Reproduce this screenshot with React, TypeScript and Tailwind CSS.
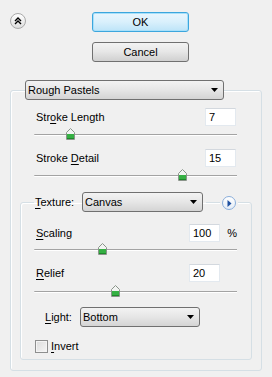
import React from 'react';

function Arrow() {
  return (
    <svg width="7" height="4" viewBox="0 0 7 4" className="shrink-0">
      <path d="M0 0 H7 L3.5 4 Z" fill="#000" />
    </svg>
  );
}

function Dropdown({ label, width }: { label: string; width: number }) {
  return (
    <div
      className="flex items-center justify-between h-[20px] pl-[2px] pr-[5px] rounded-[3px] border border-[#707070] bg-gradient-to-b from-[#f3f3f3] via-[#e6e6e6] to-[#d4d4d4] text-black"
      style={{ width }}
    >
      <span className="leading-none">{label}</span>
      <Arrow />
    </div>
  );
}

function NumInput({ value }: { value: string }) {
  return (
    <div className="w-[31px] h-[18px] flex items-center pl-[3px] bg-white border border-[#e3e9ef] border-t-[#d3d8de] leading-none">
      {value}
    </div>
  );
}

function Thumb() {
  return (
    <svg width="9" height="12" viewBox="0 0 9 12">
      <path d="M4.5 0.5 L8.5 4.5 V11.5 H0.5 V4.5 Z" fill="#f2f4f2" stroke="#8a948a" />
      <rect x="1" y="6" width="7" height="5" fill="#35b043" />
      <rect x="1" y="10" width="7" height="1" fill="#1f8a2c" />
    </svg>
  );
}

function Slider({ pos }: { pos: number }) {
  return (
    <div className="relative h-[14px]">
      <div className="absolute left-0 right-0 top-[7px] h-[2px] border-t border-[#a3a3a3] bg-white rounded-l-full" />
      <div className="absolute top-[1px]" style={{ left: pos - 4 }}>
        <Thumb />
      </div>
    </div>
  );
}

function Mn({ pre, u, post }: { pre?: string; u: string; post?: string }) {
  return (
    <span className="leading-none">
      {pre}
      <span className="underline underline-offset-[2px]">{u}</span>
      {post}
    </span>
  );
}

export default function App() {
  return (
    <div className="w-[272px] h-[377px] bg-[#f0f0f0] text-[11px] text-black font-['Liberation_Sans',Arial,sans-serif] overflow-hidden">
      {/* top: collapse + buttons */}
      <div className="flex pt-[12px] pl-[10px]">
        <div className="mt-[1px] w-[16px] h-[16px] rounded-full border border-[#a9a9a9] bg-gradient-to-b from-white to-[#dedede] flex items-center justify-center">
          <svg width="8" height="8" viewBox="0 0 8 8">
            <path d="M1 4 L4 1 L7 4 M1 7 L4 4 L7 7" fill="none" stroke="#000" strokeWidth="1.4" />
          </svg>
        </div>
        <div className="ml-[66px] flex flex-col gap-[10px]">
          <div className="w-[97px] h-[20px] rounded-[3px] border border-[#3ca6dd] bg-gradient-to-b from-[#eaf6fd] via-[#d9f0fc] to-[#bde4f8] flex items-center justify-center shadow-[inset_0_0_0_1px_#a8e0fa]">
            OK
          </div>
          <div className="w-[97px] h-[20px] rounded-[3px] border border-[#707070] bg-gradient-to-b from-[#f3f3f3] via-[#e6e6e6] to-[#d0d0d0] flex items-center justify-center">
            Cancel
          </div>
        </div>
      </div>

      {/* outer group */}
      <fieldset className="mt-[18px] ml-[10px] w-[252px] h-[291px] border border-[#d5dfe5] rounded-[3px] shadow-[inset_1px_1px_0_#fff]">
        <legend className="ml-[14px]">
          <Dropdown label="Rough Pastels" width={199} />
        </legend>

        <div className="mt-[8px] pl-[25px] pr-[25px] flex items-center justify-between">
          <Mn pre="Str" u="o" post="ke Length" />
          <NumInput value="7" />
        </div>
        <div className="mt-[1px] ml-[23px] mr-[24px]">
          <Slider pos={36} />
        </div>

        <div className="mt-[8px] pl-[25px] pr-[25px] flex items-center justify-between">
          <Mn pre="Stroke " u="D" post="etail" />
          <NumInput value="15" />
        </div>
        <div className="mt-[1px] ml-[23px] mr-[24px]">
          <Slider pos={148} />
        </div>

        {/* texture group */}
        <fieldset className="relative mt-[10px] ml-[9px] w-[232px] border border-[#d5dfe5] rounded-[3px] shadow-[inset_1px_1px_0_#fff] pb-[6px]">
          <legend className="ml-[13px] pl-[1px] pr-[3px]">
            <div className="flex items-center">
              <span className="w-[47px]">
                <Mn u="T" post="exture:" />
              </span>
              <Dropdown label="Canvas" width={121} />
            </div>
          </legend>
          <div className="absolute -top-[16px] left-[199px] px-[2px] bg-[#f0f0f0]">
            <div className="w-[14px] h-[14px] rounded-full border border-[#8aaedb] bg-gradient-to-b from-white to-[#e4ecf6] flex items-center justify-center">
              <svg width="5" height="7" viewBox="0 0 5 7">
                <path d="M0.5 0 L4.5 3.5 L0.5 7 Z" fill="#1d4fa0" />
              </svg>
            </div>
          </div>

          <div className="mt-[12px] pl-[15px] pr-[14px] flex items-center">
            <span className="flex-1">
              <Mn u="S" post="caling" />
            </span>
            <NumInput value="100" />
            <span className="w-[17px] text-right leading-none">%</span>
          </div>
          <div className="ml-[13px] mr-[14px]">
            <Slider pos={68} />
          </div>

          <div className="mt-[8px] pl-[15px] pr-[31px] flex items-center justify-between">
            <Mn u="R" post="elief" />
            <NumInput value="20" />
          </div>
          <div className="mt-[2px] ml-[13px] mr-[14px]">
            <Slider pos={81} />
          </div>

          <div className="mt-[9px] pl-[24px] flex items-center">
            <span className="w-[35px]">
              <Mn u="L" post="ight:" />
            </span>
            <Dropdown label="Bottom" width={120} />
          </div>

          <div className="mt-[13px] pl-[14px] flex items-center gap-[3px]">
            <div className="w-[13px] h-[13px] border border-[#8e8f8f] bg-gradient-to-br from-[#dcdcdc] to-[#f6f6f6] shadow-[inset_0_0_0_1px_#f4f4f4]" />
            <Mn u="I" post="nvert" />
          </div>
        </fieldset>
      </fieldset>
    </div>
  );
}
